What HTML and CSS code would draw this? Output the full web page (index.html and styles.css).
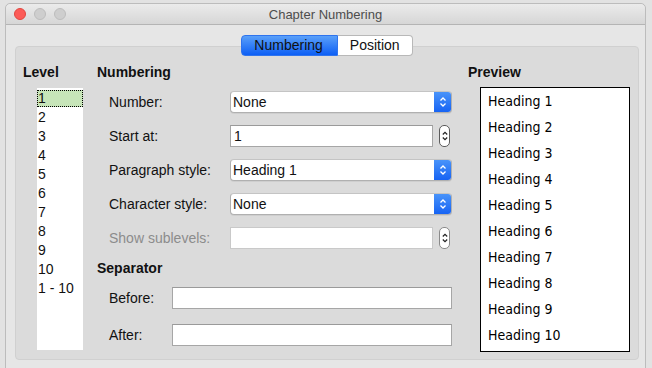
FILE: index.html
```html
<!DOCTYPE html>
<html lang="en">
<head>
  <meta charset="UTF-8">
  <title>Chapter Numbering</title>
  <link rel="stylesheet" href="styles.css">
</head>
<body>
  <div class="window">
    <div class="titlebar">
      <div class="lights">
        <span class="light close"></span>
        <span class="light"></span>
        <span class="light"></span>
      </div>
      <div class="title">Chapter Numbering</div>
      <div></div>
    </div>
    <div class="content">
      <div class="tabs">
        <span class="tab active">Numbering</span>
        <span class="tab">Position</span>
      </div>
      <div class="panel">
        <!-- Level -->
        <div class="col">
          <h3>Level</h3>
          <ul class="level-list">
            <li class="selected">1</li>
            <li>2</li>
            <li>3</li>
            <li>4</li>
            <li>5</li>
            <li>6</li>
            <li>7</li>
            <li>8</li>
            <li>9</li>
            <li>10</li>
            <li>1 - 10</li>
          </ul>
        </div>
        <!-- Numbering -->
        <div class="col">
          <h3>Numbering</h3>
          <div class="rows">
            <div class="row">
              <span class="label">Number:</span>
              <div class="select"><span>None</span><span class="arrows"><svg width="8" height="12" viewBox="0 0 8 12"><path d="M1.5 4.5 4 2 6.5 4.5M1.5 7.5 4 10 6.5 7.5" fill="none" stroke="#fff" stroke-width="1.3"/></svg></span></div>
            </div>
            <div class="row">
              <span class="label">Start at:</span>
              <div class="spin"><span class="field">1</span><span class="spin-btn"><svg width="8" height="14" viewBox="0 0 8 14"><path d="M1.8 5.5 4 3.3 6.2 5.5M1.8 8.5 4 10.7 6.2 8.5" fill="none" stroke="#222" stroke-width="1.2"/></svg></span></div>
            </div>
            <div class="row">
              <span class="label">Paragraph style:</span>
              <div class="select"><span>Heading 1</span><span class="arrows"><svg width="8" height="12" viewBox="0 0 8 12"><path d="M1.5 4.5 4 2 6.5 4.5M1.5 7.5 4 10 6.5 7.5" fill="none" stroke="#fff" stroke-width="1.3"/></svg></span></div>
            </div>
            <div class="row">
              <span class="label">Character style:</span>
              <div class="select"><span>None</span><span class="arrows"><svg width="8" height="12" viewBox="0 0 8 12"><path d="M1.5 4.5 4 2 6.5 4.5M1.5 7.5 4 10 6.5 7.5" fill="none" stroke="#fff" stroke-width="1.3"/></svg></span></div>
            </div>
            <div class="row disabled">
              <span class="label">Show sublevels:</span>
              <div class="spin"><span class="field"></span><span class="spin-btn"><svg width="8" height="14" viewBox="0 0 8 14"><path d="M1.8 5.5 4 3.3 6.2 5.5M1.8 8.5 4 10.7 6.2 8.5" fill="none" stroke="#222" stroke-width="1.2"/></svg></span></div>
            </div>
          </div>
          <h3 class="sep-title">Separator</h3>
          <div class="rows sep">
            <div class="row">
              <span class="label">Before:</span>
              <span class="field"></span>
            </div>
            <div class="row">
              <span class="label">After:</span>
              <span class="field"></span>
            </div>
          </div>
        </div>
        <!-- Preview -->
        <div class="col">
          <h3>Preview</h3>
          <div class="preview">
            <div>Heading 1</div>
            <div>Heading 2</div>
            <div>Heading 3</div>
            <div>Heading 4</div>
            <div>Heading 5</div>
            <div>Heading 6</div>
            <div>Heading 7</div>
            <div>Heading 8</div>
            <div>Heading 9</div>
            <div>Heading 10</div>
          </div>
        </div>
      </div>
    </div>
  </div>
</body>
</html>
```

FILE: styles.css
```css
*, *::before, *::after { box-sizing: border-box; }
body {
  margin: 0;
  background: #e2e2e2;
  font-family: "Liberation Sans", Arial, sans-serif;
  font-size: 14px;
  color: #111;
  overflow: hidden;
}
.window {
  margin: 3px 0 0 5px;
  width: 641px;
  height: 380px;
  background: #e6e6e6;
  border: 1px solid #bcbcbc;
  border-radius: 5px 5px 0 0;
}
.titlebar {
  height: 21px;
  display: grid;
  grid-template-columns: 1fr auto 1fr;
  align-items: center;
  background: linear-gradient(#ebebeb, #d6d6d6);
  border-bottom: 1px solid #b4b4b4;
  border-radius: 5px 5px 0 0;
}
.lights { display: flex; gap: 8px; padding-left: 8px; }
.light {
  width: 12px;
  height: 12px;
  border-radius: 50%;
  background: #cecece;
  border: 1px solid #bdbdbd;
}
.light.close { background: #fc5b57; border-color: #e2463f; }
.title { font-size: 13px; color: #4d4d4d; }

.content { padding: 10px 6px 0 9px; }
.tabs { display: flex; justify-content: center; height: 21px; position: relative; z-index: 1; }
.tab {
  height: 21px;
  line-height: 19px;
  padding: 0 12px;
  background: #fff;
  border: 1px solid #b8b8b8;
  border-left: 0;
  border-radius: 0 4px 4px 0;
}
.tab.active {
  padding: 0 14px 0 12px;
  background: linear-gradient(#5aa0f9, #0d5ff5);
  border: 1px solid #2f74ee;
  border-radius: 4px 0 0 4px;
}

.panel {
  margin-top: -10px;
  height: 314px;
  background: #dbdbdb;
  border: 1px solid #d0d0d0;
  border-radius: 4px;
  padding: 17px 7px 0 7px;
  display: grid;
  grid-template-columns: 60px 357px 162px;
  column-gap: 14px;
}
h3 { margin: 0; font-size: 14px; line-height: 17px; font-weight: bold; }

.level-list {
  list-style: none;
  margin: 7px 0 0 14px;
  padding: 2px 0 0;
  width: 46px;
  height: 262px;
  background: #fff;
}
.level-list li { height: 17px; line-height: 17px; margin-bottom: 2px; padding-left: 1px; }
.level-list li.selected { background: #c7e5b9; outline: 1px dotted #000; outline-offset: -1px; }

.rows { margin-top: 10px; padding-left: 12px; display: flex; flex-direction: column; gap: 12px; }
.row { display: flex; align-items: center; height: 22px; }
.label { width: 121px; }
.row.disabled .label { color: #8c8c8c; }
.select {
  width: 222px;
  height: 22px;
  display: flex;
  align-items: center;
  background: #fff;
  border: 1px solid #b0b0b0;
  border-top-color: #c4c4c4;
  border-radius: 4px;
  box-shadow: 0 1px 0 rgba(0, 0, 0, 0.06);
  overflow: hidden;
}
.select span:first-child { flex: 1; padding-left: 2px; }
.arrows {
  width: 18px;
  height: 22px;
  margin: -1px -1px -1px 0;
  display: flex;
  align-items: center;
  justify-content: center;
  background: linear-gradient(#4b96fa, #1461f3);
  border-radius: 0 4px 4px 0;
}
.spin { display: flex; align-items: center; gap: 6px; }
.field {
  display: block;
  height: 22px;
  line-height: 20px;
  padding-left: 3px;
  background: #fff;
  border: 1px solid #a6a6a6;
  border-top-color: #9a9a9a;
}
.spin .field { width: 203px; }
.spin-btn {
  width: 11px;
  height: 22px;
  display: flex;
  align-items: center;
  justify-content: center;
  background: #fff;
  border: 1px solid #5c5c5c;
  border-radius: 5px;
}
.row.disabled .field { border-color: #c9c9c9; }
.row.disabled .spin-btn { border-color: #8a8a8a; }

.sep-title { margin-top: 11px; }
.rows.sep { gap: 15px; }
.sep .label { width: 63px; }
.sep .field { width: 280px; }

.preview {
  margin: 6px 0 0 12px;
  width: 150px;
  height: 265px;
  background: #fff;
  border: 1px solid #000;
  padding: 0 0 0 7px;
  font-family: "DejaVu Sans", sans-serif;
  font-stretch: condensed;
  font-size: 14px;
  line-height: 26px;
  color: #000;
}
```
